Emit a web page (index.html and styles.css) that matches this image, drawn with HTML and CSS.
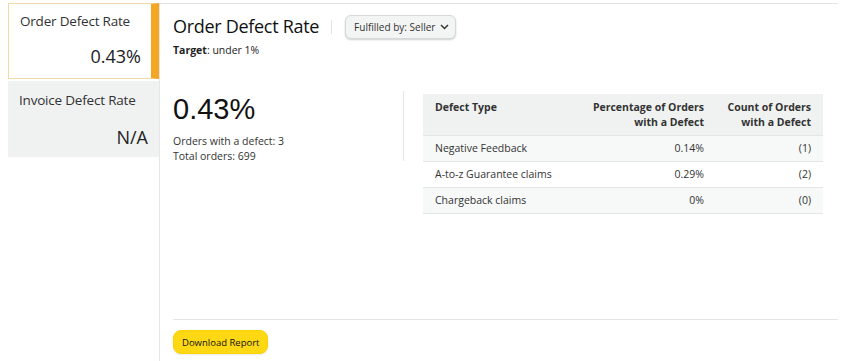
FILE: index.html
```html
<!DOCTYPE html>
<html>
<head>
<meta charset="utf-8">
<link rel="stylesheet" href="styles.css">
</head>
<body>
<div class="page">
  <aside class="side">
    <div class="card active">
      <div class="card-title">Order Defect Rate</div>
      <div class="card-value">0.43%</div>
    </div>
    <div class="card inactive">
      <div class="card-title">Invoice Defect Rate</div>
      <div class="card-value">N/A</div>
    </div>
  </aside>
  <main class="main">
    <div class="head">
      <h1 class="title">Order Defect Rate</h1>
      <span class="sep"></span>
      <button class="dd">Fulfilled by: Seller
        <svg width="9" height="6" viewBox="0 0 9 6"><path d="M1 1 L4.5 4.5 L8 1" fill="none" stroke="#333" stroke-width="1.5"/></svg>
      </button>
    </div>
    <div class="target"><b>Target</b>: under 1%</div>
    <div class="body">
      <div class="summary">
        <div class="big">0.43%</div>
        <div class="line">Orders with a defect: 3</div>
        <div class="line">Total orders: 699</div>
      </div>
      <div class="vdiv"></div>
      <table class="tbl">
        <colgroup><col class="c1"><col class="c2"><col class="c3"></colgroup>
        <thead>
          <tr><th class="l">Defect Type</th><th>Percentage of Orders<br>with a Defect</th><th>Count of Orders<br>with a Defect</th></tr>
        </thead>
        <tbody>
          <tr><td class="l">Negative Feedback</td><td>0.14%</td><td>(1)</td></tr>
          <tr><td class="l">A-to-z Guarantee claims</td><td>0.29%</td><td>(2)</td></tr>
          <tr><td class="l">Chargeback claims</td><td>0%</td><td>(0)</td></tr>
        </tbody>
      </table>
    </div>
    <div class="foot">
      <button class="dl">Download Report</button>
    </div>
  </main>
</div>
</body>
</html>
```
FILE: styles.css
```css
* { box-sizing: border-box; }
html, body { margin: 0; padding: 0; background: #fff; }
body { font-family: "Open Sans", "Noto Sans", sans-serif; color: #0f1111; }
.page { display: flex; padding: 3px 19px 0 8px; height: 361px; }
.side { width: 151px; flex: none; display: flex; flex-direction: column; gap: 2px; }
.card { height: 76px; padding: 8px 11px 10px 11px; display: flex; flex-direction: column; justify-content: space-between; }
.card.active { background: #fff; border: 1px solid #f3d9a6; border-right: 8px solid #f5a623; padding-right: 10px; }
.card.inactive { background: #f0f2f2; padding: 10px 11px 8px 11px; }
.card-title { font-size: 13.5px; color: #333; letter-spacing: -0.2px; }
.card-value { font-size: 18px; color: #222; text-align: right; }
.main { flex: 1; border-left: 1px solid #e6e6e6; border-top: 1px solid #e3e3e3; padding: 0 0 0 13px; display: flex; flex-direction: column; }
.head { display: flex; align-items: center; margin-top: 12px; height: 26px; }
.title { font-weight: 400; font-size: 18px; margin: -7px 0 0 0; color: #0f1111; letter-spacing: -0.3px; }
.sep { width: 1px; height: 14px; background: #e3e3e3; margin: -4px 11px 0 12px; }
.dd { font-family: inherit; font-size: 10px; color: #333; background: #f3f4f4; border: 1px solid #d5d9d9; border-radius: 6px; height: 24px; padding: 0 6px 0 8px; display: flex; align-items: center; gap: 5px; box-shadow: 0 1px 2px rgba(15,17,17,.2); margin: -4px 0 0 2px; }
.target { font-size: 10.5px; margin-top: 1px; color: #222; }
.target b { font-weight: 700; }
.body { display: flex; margin-top: 33px; align-items: flex-start; }
.summary { width: 230px; padding-top: 2px; }
.big { font-family: "Liberation Sans", Arial, sans-serif; font-size: 29px; color: #111; line-height: 34px; margin-bottom: 8px; }
.line { font-size: 10.5px; color: #333; line-height: 15px; }
.vdiv { width: 1px; height: 70px; background: #e6e6e6; margin-top: 1px; }
.tbl { margin-left: 19px; width: 400px; table-layout: fixed; border-collapse: collapse; font-size: 10.5px; color: #333; margin-top: 4px; }
.tbl .c1 { width: 150px; }
.tbl .c2 { width: 143px; }
.tbl .c3 { width: 107px; }
.tbl th { background: #f0f2f2; font-weight: 700; text-align: right; height: 41px; padding: 6px 12px 0 8px; line-height: 15px; vertical-align: top; }
.tbl td { text-align: right; height: 26px; padding: 0 12px 0 8px; border-top: 1px solid #e3e6e6; white-space: nowrap; }
.tbl tbody tr:nth-child(odd) td { background: #f7f8f8; }
.tbl tbody tr:nth-child(even) td { background: #fff; }
.tbl tbody tr:last-child td { border-bottom: 1px solid #e3e6e6; }
.tbl .l { text-align: left; padding-left: 12px; }
.foot { margin-top: auto; border-top: 1px solid #e6e6e6; padding: 10px 0 7px 0; display: flex; }
.dl { font-family: inherit; font-size: 9.5px; color: #0f1111; background: #ffd814; border: 1px solid #fcd200; border-radius: 8px; height: 24px; padding: 0 8px; box-shadow: 0 1px 2px rgba(213,217,217,.5); }
```
